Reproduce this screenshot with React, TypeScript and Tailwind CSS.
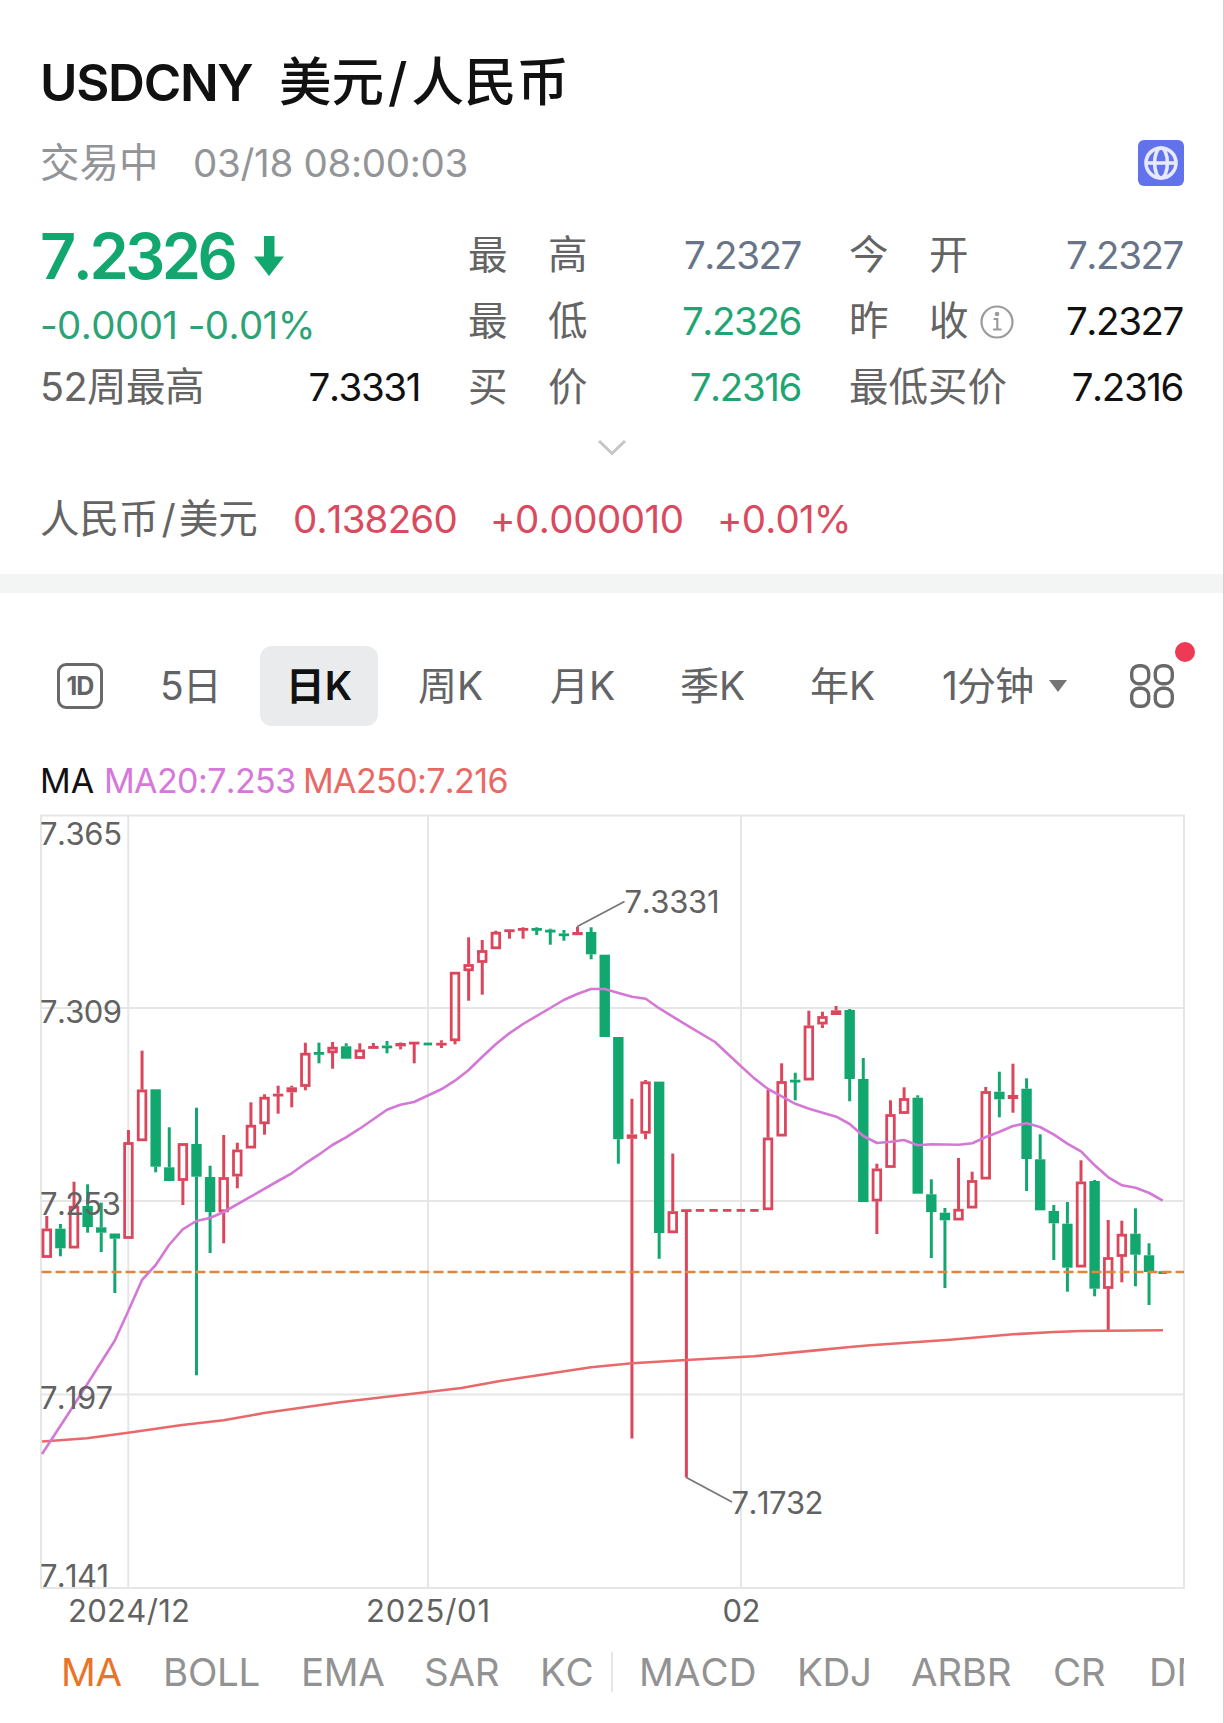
import { clsx } from "clsx";

const RED = "#dc465c";
const GREEN = "#12a76f";
const FONT = "Inter, 'Noto Sans CJK SC', sans-serif";

// [direction, high, body top, body bottom, low]
type Candle = ["up" | "down", number, number, number, number];

const candles: Candle[] = [
  ["up", 1216, 1228.7, 1257.7, 1257.7],
  ["down", 1224, 1228.7, 1248.3, 1256.3],
  ["up", 1181.7, 1206, 1248.3, 1248.3],
  ["down", 1184.3, 1206, 1227, 1232.7],
  ["down", 1202.7, 1227.3, 1232.7, 1252],
  ["down", 1233.5, 1233.5, 1238.7, 1293],
  ["up", 1130, 1142.3, 1238.7, 1238.7],
  ["up", 1050.7, 1089.7, 1141, 1141],
  ["down", 1089.3, 1089.3, 1166.7, 1172.3],
  ["down", 1127.3, 1167.3, 1181, 1181],
  ["up", 1143.3, 1143.3, 1180.7, 1205],
  ["down", 1107.7, 1144, 1176.7, 1375.3],
  ["down", 1165.7, 1177, 1212, 1253],
  ["up", 1135, 1177.3, 1212, 1243.3],
  ["up", 1142.7, 1149.7, 1176.3, 1188.3],
  ["up", 1102.3, 1125, 1148.3, 1148.3],
  ["up", 1094.3, 1097, 1124, 1134.7],
  ["up", 1085.7, 1093.7, 1095.8, 1113.7],
  ["up", 1085.7, 1087.3, 1092.3, 1107.3],
  ["up", 1042.7, 1053, 1086.7, 1090.3],
  ["down", 1042.7, 1052, 1054.3, 1063.3],
  ["up", 1042, 1047, 1053, 1068.7],
  ["down", 1043.3, 1046.3, 1058.7, 1058.7],
  ["up", 1043.3, 1049.7, 1058.7, 1058.7],
  ["up", 1043, 1046, 1048.9, 1048.9],
  ["down", 1041, 1045.5, 1048, 1053.3],
  ["up", 1042.5, 1043, 1046.4, 1049.3],
  ["up", 1041.7, 1041.7, 1043.8, 1063.3],
  ["down", 1042.6, 1042.6, 1044.8, 1044.8],
  ["up", 1040.3, 1042.8, 1045, 1048],
  ["up", 972, 972, 1041, 1044.3],
  ["up", 937.3, 964.3, 971, 1000.7],
  ["up", 940, 950.3, 962.7, 994.7],
  ["up", 930.7, 932, 949, 949],
  ["up", 929.3, 929.3, 931.3, 938.7],
  ["up", 927.3, 928, 930.2, 938.7],
  ["down", 927.3, 928, 930.3, 935],
  ["down", 928.7, 929.7, 932, 944.7],
  ["down", 930, 933.4, 935.8, 940.7],
  ["up", 926.7, 932, 935.2, 935.2],
  ["down", 927.3, 932, 954.3, 959.3],
  ["down", 954.7, 954.7, 1037, 1037],
  ["down", 1037, 1037, 1139.2, 1163.7],
  ["up", 1098.8, 1134.4, 1138.8, 1438.4],
  ["up", 1080, 1081.6, 1133.5, 1139.2],
  ["down", 1081.6, 1081.6, 1233, 1258.8],
  ["up", 1153.5, 1211.4, 1233, 1233],
  ["up", 1209.2, 1209.2, 1211.4, 1477.5],
  ["up", 1209, 1209, 1211.4, 1211.4],
  ["up", 1209, 1209, 1211.4, 1211.4],
  ["up", 1209, 1209, 1211.4, 1211.4],
  ["up", 1209, 1209, 1211.4, 1211.4],
  ["up", 1209, 1209, 1211.4, 1211.4],
  ["up", 1090, 1137.7, 1210, 1210],
  ["up", 1063.3, 1081.3, 1136.3, 1136.3],
  ["down", 1072.7, 1079.7, 1081.7, 1100.3],
  ["up", 1010.7, 1025.7, 1080.3, 1080.3],
  ["up", 1011.7, 1016.3, 1024.3, 1028],
  ["up", 1006, 1010.3, 1015, 1015],
  ["down", 1009, 1010, 1079, 1101.3],
  ["down", 1058, 1079, 1202, 1202],
  ["up", 1163.7, 1168.7, 1201.3, 1234],
  ["up", 1100.3, 1114.3, 1167.7, 1167.7],
  ["up", 1087.3, 1098.3, 1113.7, 1113.7],
  ["down", 1095.3, 1097.7, 1193.7, 1193.7],
  ["down", 1179.3, 1194.3, 1212, 1258],
  ["down", 1208, 1212.7, 1220.3, 1288],
  ["up", 1158, 1209, 1220.3, 1220.3],
  ["up", 1171.7, 1180.3, 1208.3, 1208.3],
  ["up", 1087, 1091.3, 1179.3, 1179.3],
  ["down", 1071.7, 1091.7, 1099.3, 1117.3],
  ["up", 1063.7, 1095, 1099, 1112.7],
  ["down", 1078.3, 1088.7, 1159, 1191],
  ["down", 1134.3, 1159.3, 1210.3, 1210.3],
  ["down", 1205, 1211, 1223.3, 1260],
  ["down", 1202, 1223.7, 1267.7, 1291.7],
  ["up", 1160.3, 1181.7, 1267.3, 1267.3],
  ["down", 1180, 1181, 1288.7, 1296.3],
  ["up", 1220, 1257.3, 1288.7, 1330.3],
  ["up", 1220.7, 1234, 1256.7, 1282.3],
  ["down", 1208.3, 1233.7, 1254.7, 1286.3],
  ["down", 1243.3, 1255.3, 1272, 1305],
  ["down", 1271.2, 1271.2, 1273.3, 1273.3],
];

const ma20 =
  "42,1454 60,1426.5 74,1405 114.7,1340.7 128.3,1311 142,1280 155.7,1265 169,1245 182.7,1229.3 196.3,1221 210,1218 223.7,1212 250.7,1196.7 278,1181 291.7,1173.3 305,1163.7 318.7,1154.7 332.3,1145 346,1137.3 359.7,1128.7 387,1109.7 400.3,1104.7 414,1102 441.3,1089.3 455,1080.7 468.7,1070 482.3,1056.7 496,1044 509.3,1033.3 523,1024 550.3,1008 563.7,1000 577.3,994 591,989 604.7,989 618.5,993 632,996.7 645.7,998.8 659,1008.2 686.3,1024.9 715,1042 740.7,1066 754.3,1078.4 768,1089 781.7,1096.3 795.3,1103.8 809,1108.7 836.3,1116.7 849.7,1124 863.3,1136 877,1143 890.7,1141.7 904,1140 917.7,1145.3 931.3,1144.3 958.7,1144.7 972.3,1143.3 986,1137 999,1132 1013,1126 1026.7,1123.3 1040,1127 1054,1134.7 1067.3,1143.7 1081,1151.3 1094.7,1165.3 1108.3,1177.3 1122,1185.3 1135.7,1187.7 1149.3,1193 1162.7,1200.7";

const ma250 =
  "42,1441.5 87,1438.3 128,1432.7 182,1425 223.7,1420.3 264,1413 340,1402.3 427.5,1392 461.5,1388 500,1381 540,1375 591,1367.3 632,1363.3 686.3,1360 754,1356.3 813,1350.6 850,1347 870,1345.3 950,1339.7 1013,1334.3 1054,1332 1081,1331 1108,1330.7 1163,1330.3";

// [text, x, baseline, drawn width]
const chartLabels: [string, number, number, number][] = [
  ["7.365", 40, 844.7, 82],
  ["7.309", 40, 1022.5, 82],
  ["7.253", 40, 1215.3, 81],
  ["7.197", 40, 1409.2, 73],
  ["7.141", 40, 1587.4, 69],
  ["7.3331", 624.5, 912.6, 95],
  ["7.1732", 731.5, 1513.5, 92],
  ["2024/12", 68, 1621.7, 122],
  ["2025/01", 366, 1621.7, 124],
  ["02", 722.5, 1621.7, 38],
];

const periods = [
  { label: "周K", className: "w-[132px]" },
  { label: "月K", className: "w-[130px]" },
  { label: "季K", className: "w-[130px]" },
  { label: "年K", className: "w-[132px]" },
];

const overlays = [
  { label: "MA", className: "w-[102px] text-[#ea7426]" },
  { label: "BOLL", className: "w-[138px]" },
  { label: "EMA", className: "w-[123px]" },
  { label: "SAR", className: "w-[116px]" },
  { label: "KC", className: "w-[71px]" },
];

const oscillators = [
  { label: "MACD", className: "w-[158px] tracking-[0.1px]" },
  { label: "KDJ", className: "w-[114px]" },
  { label: "ARBR", className: "w-[142px]" },
  { label: "CR", className: "w-[96px]" },
  { label: "DMA", className: "w-[35px] overflow-hidden" },
];

function Quote({ label, value, color, wide = false, info = false }) {
  return (
    <div className="flex h-[66px] items-center">
      <span className="flex items-center pt-0.5 text-[39.5px] text-[#646464]">
        {wide ? (
          <>
            <span className="w-[80px]">{label[0]}</span>
            <span>{label[1]}</span>
          </>
        ) : (
          label
        )}
      </span>
      {info && (
        <svg className="ml-2.5 h-9 w-9" viewBox="0 0 36 36" fill="none" stroke="#9b9b9b" strokeWidth="2.2">
          <circle cx="18" cy="19" r="15.5" />
          <path d="M14.5 16h3.8v10.500M14 26.500h8.500" />
          <circle cx="18" cy="11" r="1.2" fill="#9b9b9b" />
        </svg>
      )}
      <span className={clsx("mr-px ml-auto text-[38.5px] tracking-[-1.4px]", color)}>{value}</span>
    </div>
  );
}

function KLineChart() {
  return (
    <svg className="block h-[840px] w-[1224px]" viewBox="0 800 1224 840" fill="none">
      <g stroke="#e6e6e6" strokeWidth="2">
        <rect x="41" y="815.5" width="1143" height="772.5" />
        <path d="M41 1008H1184M41 1201H1184M41 1394.5H1184" />
        <path d="M128.3 815V1588M428 815V1588M741 815V1588" />
      </g>

      {candles.map(([dir, high, top, bottom, low], i) => {
        const x = 46.8 + i * 13.608;
        const color = dir === "up" ? RED : GREEN;
        const hollow = dir === "up" && bottom - top > 5.2;
        const height = Math.max(bottom - top, 2.8);
        // days without any trading range are drawn as a shorter dash
        const half = high === top && low === bottom && bottom - top < 2.6 ? 4.2 : 5.2;
        return (
          <g key={i} stroke={color} strokeWidth="3">
            {high < top && <path d={`M${x} ${high}V${top}`} />}
            {low > bottom && <path d={`M${x} ${bottom}V${low}`} />}
            {hollow ? (
              <rect x={x - 3.8} y={top + 1.2} width="7.6" height={bottom - top - 2.4} strokeWidth="2.8" />
            ) : (
              <rect x={x - half} y={top} width={half * 2} height={height} fill={color} stroke="none" />
            )}
          </g>
        );
      })}

      <path d="M41.5 1272H1184" stroke="#e2853d" strokeWidth="2.7" strokeDasharray="10 4" />
      <polyline points={ma250} stroke="#e9696b" strokeWidth="2.6" strokeLinejoin="round" />
      <polyline points={ma20} stroke="#d478d6" strokeWidth="2.6" strokeLinejoin="round" />
      <path d="M577.3 926.5L624.5 901.5M686.3 1477.5L732 1502" stroke="#777" strokeWidth="1.8" />

      {chartLabels.map(([text, x, y, width]) => (
        <text
          key={text}
          x={x}
          y={y}
          textLength={width}
          fontSize="31"
          fill="#626262"
          fontFamily={FONT}
          className="[font-kerning:none]"
        >
          {text}
        </text>
      ))}
    </svg>
  );
}

function App() {
  return (
    <div className="h-[1723px] w-[1224px] overflow-hidden border-r border-[#cfcfcf] bg-white font-[Inter,'Noto_Sans_CJK_SC',sans-serif] leading-none whitespace-nowrap [font-kerning:none]">
      <header className="pt-[50px] pr-[39px] pl-[40px]">
        <h1 className="flex h-16 items-center text-[51px] font-medium text-[#111]">
          <span className="w-[239px] font-semibold tracking-[-1.3px]">USDCNY</span>
          <span className="text-[52.5px]">
            美元<span className="mx-1">/</span>人民币
          </span>
        </h1>

        <div className="mt-[19px] flex h-[60px] items-center text-[39.5px] text-[#939497]">
          <span className="w-[153px] pt-0.5">交易中</span>
          <span className="text-[38.5px] tracking-[-0.3px]">03/18 08:00:03</span>
          <span className="ml-auto flex h-[46px] w-[46px] items-center justify-center rounded-md bg-[#6172ea]">
            <svg className="h-9 w-9" viewBox="0 0 36 36" fill="none" stroke="#e6e9ff" strokeWidth="3.6">
              <circle cx="18" cy="18" r="15" />
              <ellipse cx="18" cy="18" rx="6.4" ry="15" />
              <path d="M3 18h30" />
            </svg>
          </span>
        </div>

        <div className="mt-[29px] grid grid-cols-[381px_334px_335px] gap-x-[47px]">
          <div>
            <div className="flex h-[66px] items-center pt-0.5 text-[63px] font-semibold tracking-[-3.5px] text-[#12a76f]">
              7.2326
              <svg className="ml-[20px] h-10 w-[30px]" viewBox="0 0 30 40" fill="#12a76f">
                <path d="M10 0h10.500v20.500H30L15 40 0 20.500h10z" />
              </svg>
            </div>
            <div className="flex h-[66px] items-center pt-2 text-[38.5px] tracking-[-0.6px] text-[#2ba376]">
              -0.0001 -0.01%
            </div>
            <div className="tracking-[-0.5px]">
              <Quote label="52周最高" value="7.3331" color="text-[#111]" />
            </div>
          </div>
          <div>
            <Quote label="最高" value="7.2327" color="text-[#677489]" wide />
            <Quote label="最低" value="7.2326" color="text-[#1fa574]" wide />
            <Quote label="买价" value="7.2316" color="text-[#1fa574]" wide />
          </div>
          <div>
            <Quote label="今开" value="7.2327" color="text-[#677489]" wide />
            <Quote label="昨收" value="7.2327" color="text-[#111]" wide info />
            <Quote label="最低买价" value="7.2316" color="text-[#111]" />
          </div>
        </div>

        <div className="flex h-14 items-center justify-center">
          <svg className="h-4 w-7" viewBox="0 0 28 16" fill="none" stroke="#c6c6c6" strokeWidth="3">
            <path d="M1 1L14 13.500 27 1" />
          </svg>
        </div>

        <div className="mt-2.5 flex h-[66px] items-center text-[38.5px] tracking-[-0.8px] text-[#d94a5e]">
          <span className="w-[253px] pt-0.5 text-[39.5px] tracking-normal text-[#646464]">
            人民币<span className="mx-[3px]">/</span>美元
          </span>
          <span className="w-[197px]">0.138260</span>
          <span className="w-[227px] tracking-[-0.5px]">+0.000010</span>
          <span>+0.01%</span>
        </div>
      </header>

      <div className="mt-[22px] h-[19px] bg-[#f3f5f5]" />

      <section className="pt-[53px]">
        <nav className="flex h-20 items-center pl-[57px] text-[39px] text-[#626365]">
          <span className="flex h-[46px] w-[46px] items-center justify-center rounded-[9px] border-3 border-[#69696b] text-[25px] font-bold tracking-[-0.8px]">
            1D
          </span>
          <span className="ml-[57px] w-[100px] pb-0.5 tracking-[-1px]">5日</span>
          <span className="mr-[40px] flex h-20 w-[118px] items-center justify-center rounded-xl bg-[#eaebed] pb-0.5 font-semibold text-[#111]">
            日K
          </span>
          {periods.map((period) => (
            <span key={period.label} className={clsx("pb-0.5", period.className)}>
              {period.label}
            </span>
          ))}
          <span className="w-[107px] pb-0.5 tracking-[-0.8px]">1分钟</span>
          <svg className="h-3 w-[18px]" viewBox="0 0 18 12" fill="#757575">
            <path d="M0 0h18L9 12z" />
          </svg>
          <span className="relative ml-[63px] h-11 w-11">
            <svg className="h-11 w-11" viewBox="0 0 44 44" fill="none" stroke="#69696b" strokeWidth="3.4">
              <rect x="1.7" y="1.7" width="17" height="18" rx="7" />
              <rect x="25.3" y="1.7" width="17" height="18" rx="7" />
              <rect x="1.7" y="24.3" width="17" height="18" rx="7" />
              <rect x="25.3" y="24.3" width="17" height="18" rx="7" />
            </svg>
            <span className="absolute top-[-22px] left-[45px] h-5 w-5 rounded-full bg-[#ee3a55]" />
          </span>
        </nav>

        <div className="mt-[34px] flex h-10 items-center pt-px pl-[40px] text-[34px] tracking-[-0.6px]">
          <span className="w-[64px] tracking-normal text-[#111]">MA</span>
          <span className="w-[199px] text-[#d678da]">MA20:7.253</span>
          <span className="text-[#ea6864]">MA250:7.216</span>
        </div>

        <KLineChart />

        <div className="flex h-16 items-center pl-[61px] text-[38.5px] tracking-[-0.3px] text-[#929292]">
          {overlays.map((item) => (
            <span key={item.label} className={item.className}>
              {item.label}
            </span>
          ))}
          <span className="mr-[26px] h-10 w-0.5 bg-[#e6e6e6]" />
          {oscillators.map((item) => (
            <span key={item.label} className={clsx("shrink-0", item.className)}>
              {item.label}
            </span>
          ))}
        </div>
      </section>
    </div>
  );
}

export default App;
